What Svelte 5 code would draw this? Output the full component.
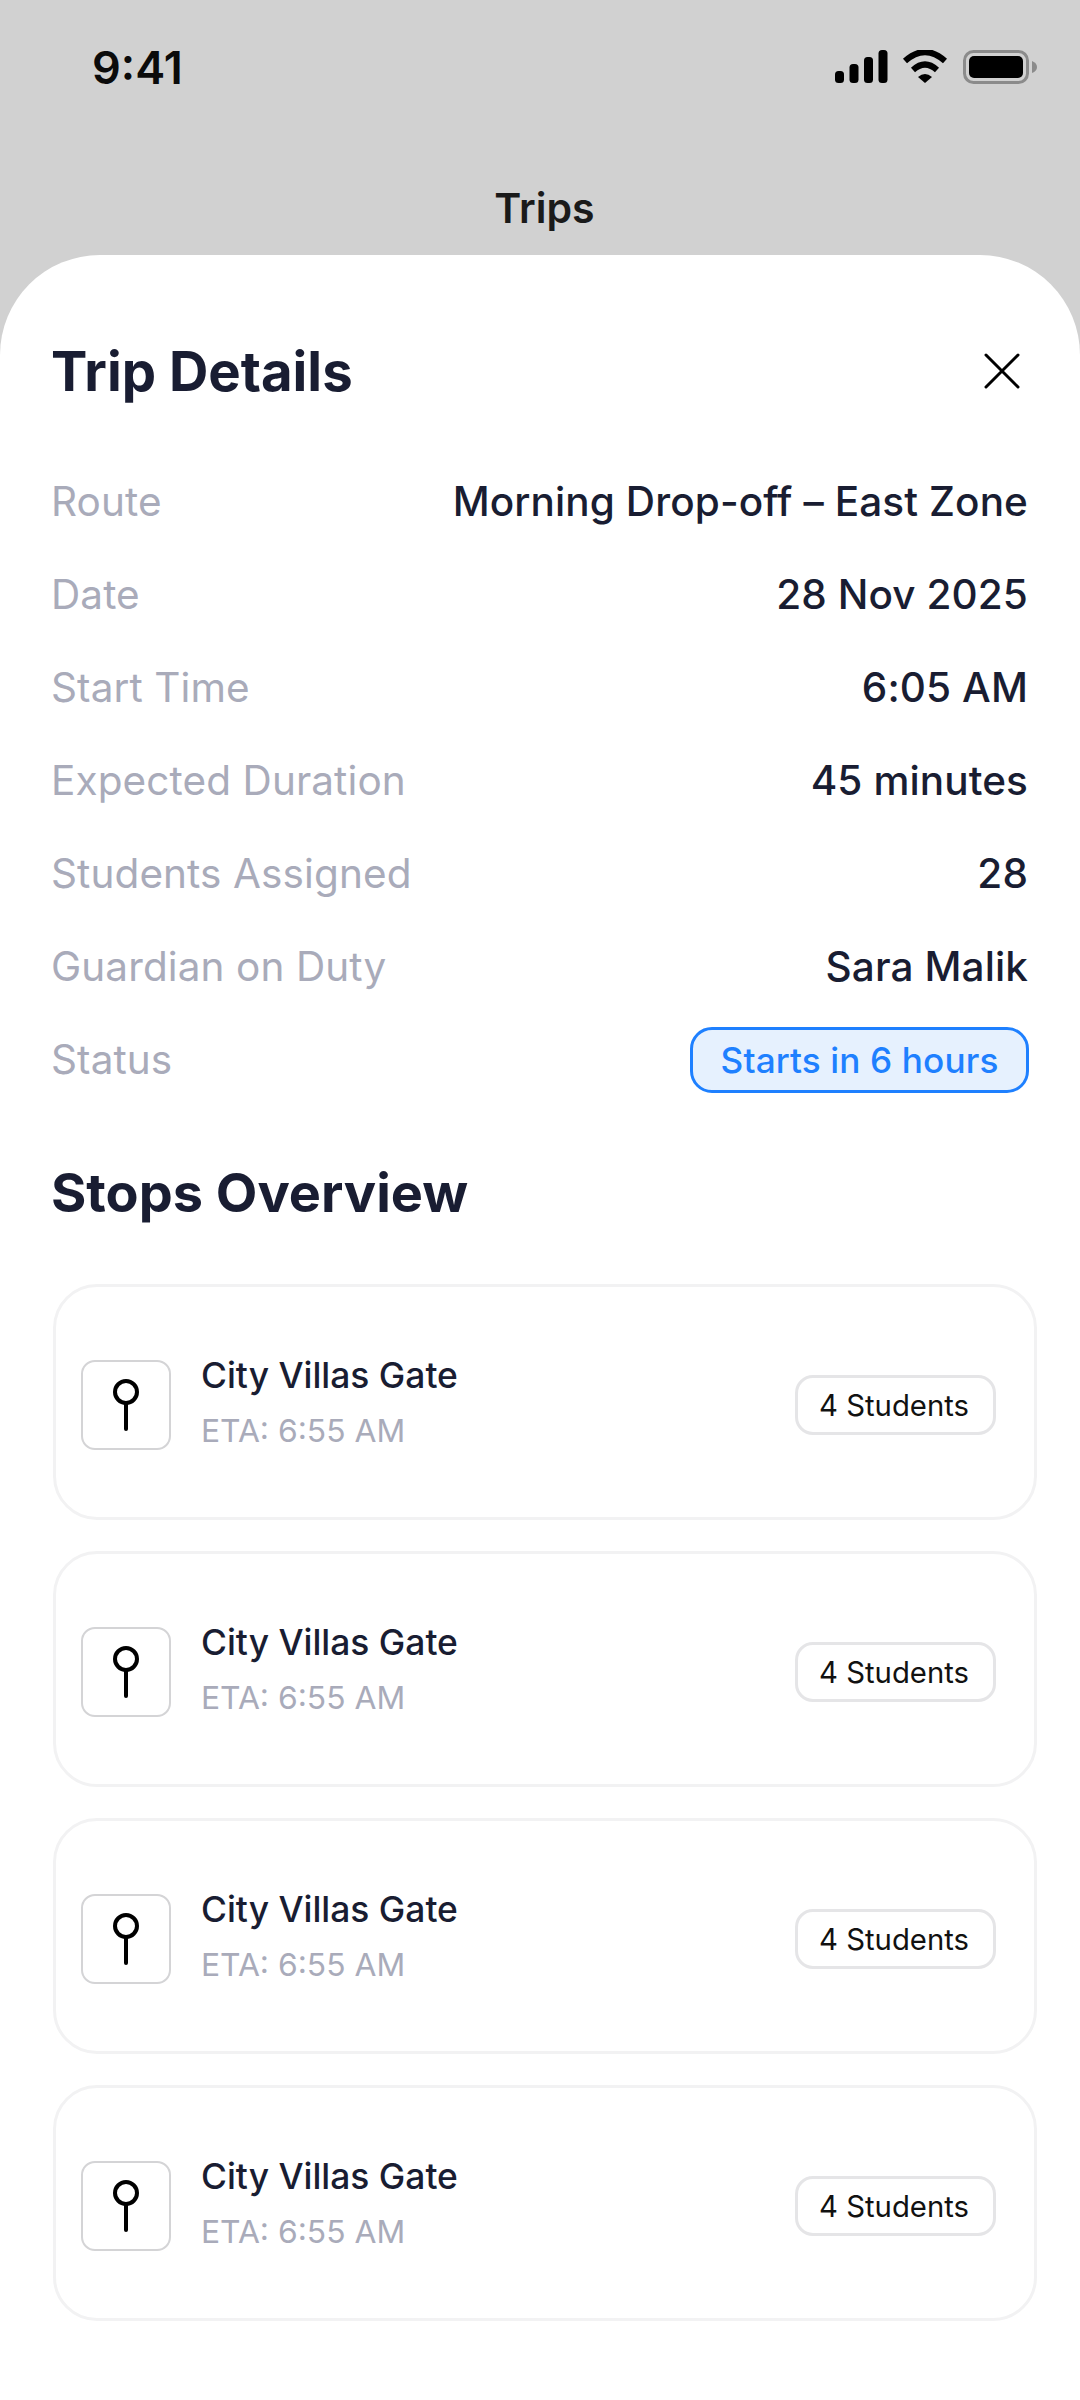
<script>
  const details = [
    { label: 'Route', value: 'Morning Drop-off – East Zone' },
    { label: 'Date', value: '28 Nov 2025' },
    { label: 'Start Time', value: '6:05 AM' },
    { label: 'Expected Duration', value: '45 minutes' },
    { label: 'Students Assigned', value: '28' },
    { label: 'Guardian on Duty', value: 'Sara Malik' }
  ];

  const stops = [
    { name: 'City Villas Gate', eta: 'ETA: 6:55 AM', students: '4 Students' },
    { name: 'City Villas Gate', eta: 'ETA: 6:55 AM', students: '4 Students' },
    { name: 'City Villas Gate', eta: 'ETA: 6:55 AM', students: '4 Students' },
    { name: 'City Villas Gate', eta: 'ETA: 6:55 AM', students: '4 Students' }
  ];
</script>

<div class="screen">
  <header class="status">
    <span class="time">9:41</span>
    <svg class="status-icons" width="202" height="34" viewBox="0 0 202 34">
      <rect x="0" y="21" width="9" height="12" rx="3.5" fill="#000" />
      <rect x="14.5" y="14" width="9" height="19" rx="3.5" fill="#000" />
      <rect x="29" y="7" width="9" height="26" rx="3.5" fill="#000" />
      <rect x="43.5" y="0" width="9" height="33" rx="3.5" fill="#000" />
      <path d="M70 11 Q90 -7 110 11" fill="none" stroke="#000" stroke-width="6" />
      <path d="M78 20 Q90 9 102 20" fill="none" stroke="#000" stroke-width="6" />
      <path d="M83 27 Q90 21 97 27 L90 33 Z" fill="#000" />
      <rect x="129.5" y="1.5" width="63" height="31" rx="9" fill="none" stroke="#8b8b8b" stroke-width="3" />
      <rect x="134" y="6" width="54" height="22" rx="5" fill="#000" />
      <path d="M197 11 Q202 13 202 17 Q202 21 197 23 Z" fill="#8b8b8b" />
    </svg>
  </header>

  <div class="nav-title">Trips</div>

  <main class="sheet">
    <div class="sheet-head">
      <h1>Trip Details</h1>
      <svg width="36" height="36" viewBox="0 0 36 36" class="close">
        <path d="M2 2 L34 34 M34 2 L2 34" stroke="#000" stroke-width="3" fill="none" stroke-linecap="round" />
      </svg>
    </div>

    <dl class="details">
      {#each details as row}
        <div class="row">
          <dt>{row.label}</dt>
          <dd>{row.value}</dd>
        </div>
      {/each}
      <div class="row">
        <dt>Status</dt>
        <dd><span class="badge">Starts in 6 hours</span></dd>
      </div>
    </dl>

    <h2>Stops Overview</h2>

    <div class="stops">
      {#each stops as stop}
        <div class="stop">
          <div class="pin-box">
            <svg width="30" height="54" viewBox="0 0 30 54">
              <circle cx="15" cy="14" r="11" fill="none" stroke="#000" stroke-width="4" />
              <path d="M15 25 V51" stroke="#000" stroke-width="4" stroke-linecap="round" />
            </svg>
          </div>
          <div class="stop-text">
            <div class="stop-name">{stop.name}</div>
            <div class="stop-eta">{stop.eta}</div>
          </div>
          <span class="pill">{stop.students}</span>
        </div>
      {/each}
    </div>
  </main>
</div>

<style>
  :global(body) {
    background: #fff;
  }

  .screen {
    width: 1080px;
    height: 2400px;
    background: #d1d1d1;
    display: flex;
    flex-direction: column;
    font-family: Inter, "Liberation Sans", sans-serif;
    overflow: hidden;
  }

  .status {
    height: 68px;
    padding: 33px 43px 0 92px;
    display: flex;
    justify-content: space-between;
    align-items: center;
  }

  .time {
    font-size: 45px;
    font-weight: 600;
    color: #0b0b0b;
  }

  .nav-title {
    margin-top: 82px;
    height: 72px;
    padding-left: 9px;
    text-align: center;
    font-size: 41px;
    font-weight: 600;
    color: #1a1a1a;
  }

  .sheet {
    flex: 1;
    background: #fff;
    border-radius: 100px 100px 0 0;
    padding: 0 44px 0 51px;
  }

  .sheet-head {
    height: 200px;
    display: flex;
    justify-content: space-between;
    align-items: center;
    padding-top: 32px;
    box-sizing: border-box;
    padding-right: 16px;
  }

  h1, h2 {
    margin: 0;
    font-size: 54.5px;
    font-weight: 700;
    color: #191d32;
  }

  h2 {
    margin-top: 54px;
    font-size: 54px;
  }

  .details {
    margin: 0;
  }

  .row {
    height: 93px;
    display: flex;
    justify-content: space-between;
    align-items: center;
    padding-right: 8px;
    font-size: 40.5px;
  }

  dt {
    color: #a9abba;
    letter-spacing: 0.1px;
  }

  dd {
    margin: 0;
    color: #191d32;
    font-weight: 450;
    letter-spacing: 0.1px;
  }

  .badge {
    display: block;
    box-sizing: border-box;
    width: 339px;
    height: 66px;
    margin-right: -1px;
    line-height: 60px;
    text-align: center;
    border: 3px solid #1e80ff;
    border-radius: 22px;
    background: #e6f1fe;
    color: #1e80ff;
    font-size: 35.2px;
    font-weight: 450;
  }

  .stops {
    margin-top: 59px;
    display: flex;
    flex-direction: column;
    gap: 31px;
    width: 984px;
    margin-left: 2px;
  }

  .stop {
    box-sizing: border-box;
    height: 236px;
    border: 3px solid #f2f2f3;
    border-radius: 44px;
    padding: 6px 38px 0 25px;
    display: flex;
    align-items: center;
  }

  .pin-box {
    box-sizing: border-box;
    width: 90px;
    height: 90px;
    border: 2px solid #d4d4d6;
    border-radius: 14px;
    display: flex;
    align-items: center;
    justify-content: center;
  }

  .stop-text {
    flex: 1;
    margin-left: 30px;
    margin-bottom: 7px;
  }

  .stop-name {
    font-size: 35.4px;
    font-weight: 500;
    color: #191d32;
  }

  .stop-eta {
    margin-top: 14px;
    font-size: 31.8px;
    color: #a9abba;
  }

  .pill {
    box-sizing: border-box;
    width: 201px;
    height: 60px;
    line-height: 56px;
    padding-right: 3px;
    text-align: center;
    border: 3px solid #e5e5e7;
    border-radius: 18px;
    font-size: 29.3px;
    color: #111;
  }
</style>
